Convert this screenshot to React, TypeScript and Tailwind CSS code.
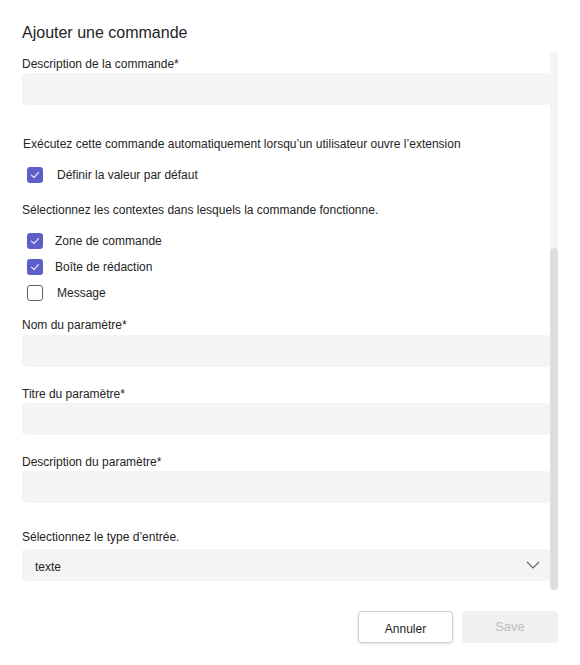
import React from "react";

function Check({ checked, label, textX }: { checked: boolean; label: string; textX: string }) {
  return (
    <div className="flex items-center h-4 pl-[5px]">
      {checked ? (
        <div className="w-4 h-4 rounded-[3px] bg-[#5b5fc7] flex items-center justify-center">
          <svg width="10" height="8" viewBox="0 0 10 8" fill="none">
            <path d="M1.5 4.2 L4 6.5 L8.5 1.5" stroke="#dcdcf5" strokeWidth="1.2" strokeLinecap="round" strokeLinejoin="round" />
          </svg>
        </div>
      ) : (
        <div className="w-4 h-4 rounded-[3px] border border-[#616161] bg-white" />
      )}
      <span className={`${textX} text-[12px] leading-4 text-[#242424]`}>{label}</span>
    </div>
  );
}

function Field({ label, mt }: { label: string; mt: string }) {
  return (
    <div className={`flex flex-col ${mt}`}>
      <div className="text-[12px] leading-4 text-[#242424]">{label}</div>
      <div className="mt-[1px] h-8 rounded-[4px] bg-[#f4f4f4]" />
    </div>
  );
}

export default function App() {
  return (
    <div
      className="w-[580px] h-[665px] bg-white flex flex-col"
      style={{ fontFamily: '"Liberation Sans", Arial, sans-serif' }}
    >
      <div className="pt-[21px] pl-[22px] text-[16px] leading-6 text-[#242424]">Ajouter une commande</div>
      <div className="mt-[7px] flex h-[538px] pl-[22px] pr-[22px]">
        <div className="flex-1 flex flex-col pt-1">
          <Field label="Description de la commande*" mt="" />
          <div className="mt-[31px] pl-[1px] text-[12px] leading-4 text-[#242424]">
            Exécutez cette commande automatiquement lorsqu’un utilisateur ouvre l’extension
          </div>
          <div className="mt-[15px]">
            <Check checked label="Définir la valeur par défaut" textX="ml-[14px]" />
          </div>
          <div className="mt-[19px] text-[12px] leading-4 text-[#242424]">
            Sélectionnez les contextes dans lesquels la commande fonctionne.
          </div>
          <div className="mt-[15px]">
            <Check checked label="Zone de commande" textX="ml-3" />
          </div>
          <div className="mt-[10px]">
            <Check checked label="Boîte de rédaction" textX="ml-3" />
          </div>
          <div className="mt-[10px]">
            <Check checked={false} label="Message" textX="ml-[14px]" />
          </div>
          <div className="mt-4 flex flex-col">
            <div className="text-[12px] leading-4 text-[#242424]">Nom du paramètre*</div>
            <div className="mt-[2px] h-8 rounded-[4px] bg-[#f4f4f4]" />
          </div>
          <Field label="Titre du paramètre*" mt="mt-[19px]" />
          <Field label="Description du paramètre*" mt="mt-[19px]" />
          <div className="mt-[26px] text-[12px] leading-4 text-[#242424]">Sélectionnez le type d’entrée.</div>
          <div className="mt-1 h-8 rounded-[4px] bg-[#f4f4f4] flex items-center justify-between pl-[13px] pr-[10px]">
            <span className="text-[12px] text-[#242424] pt-[3px]">texte</span>
            <svg width="14" height="8" viewBox="0 0 14 8" fill="none">
              <path d="M1 1 L7 7 L13 1" stroke="#616161" strokeWidth="1.1" />
            </svg>
          </div>
        </div>
        <div className="w-2 flex flex-col bg-[#f5f5f5] rounded-t-[4px] rounded-b-[4px]">
          <div className="h-[196px]" />
          <div className="flex-1 rounded-[4px] bg-[#dedede]" />
        </div>
      </div>
      <div className="mt-[21px] flex justify-end gap-[9px] pr-[22px]">
        <button className="w-[95px] h-8 rounded-[4px] border border-[#d1d1d1] bg-white shadow-[0_1px_3px_rgba(0,0,0,0.12)] text-[12px] text-[#242424] pt-[4px]">
          Annuler
        </button>
        <button className="w-[96px] h-8 rounded-[4px] bg-[#f0f0f0] text-[13px] text-[#bdbdbd]">Save</button>
      </div>
    </div>
  );
}
